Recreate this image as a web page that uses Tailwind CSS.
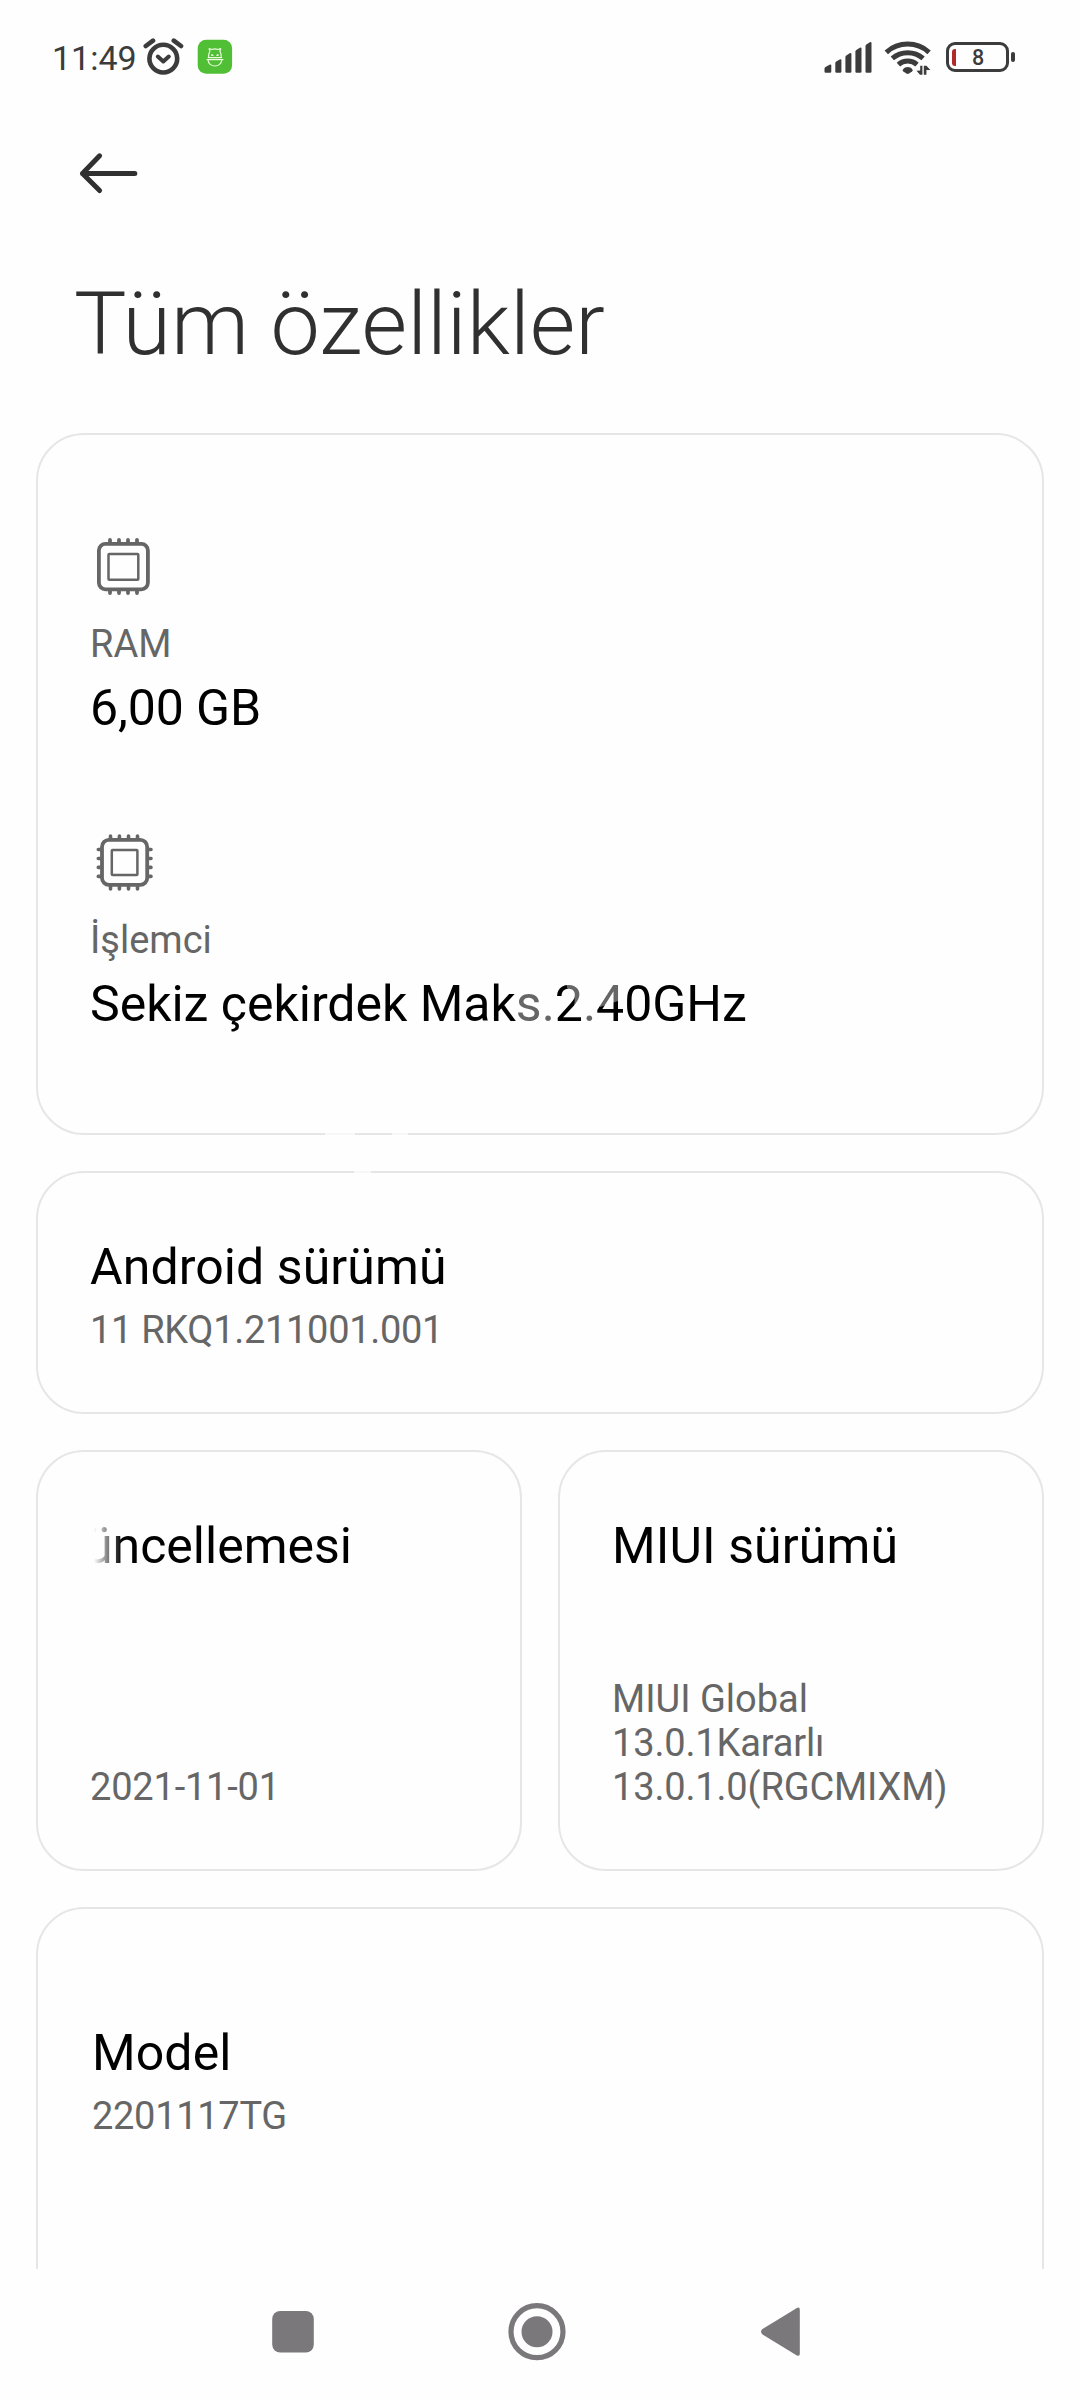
<!DOCTYPE html>
<html lang="tr">
<head>
<meta charset="utf-8">
<title>Tüm özellikler</title>
<script src="https://cdn.jsdelivr.net/npm/@tailwindcss/browser@4"></script>
</head>
<body class="bg-[#fefefe]">
<div class="relative flex h-[2400px] w-[1080px] flex-col overflow-hidden bg-[#fefefe] font-['Roboto',sans-serif] text-black">

  <!-- status bar -->
  <header class="flex h-[116px] shrink-0 items-start justify-between pr-[65px] pl-[52px] text-[#3c3c3c]">
    <div class="flex items-start pt-[38px]">
      <span class="w-[90px] text-[34px] leading-[40px] font-[450]">11:49</span>
      <svg class="h-[40px] w-[42px]" viewBox="142 38 42 40" fill="none" stroke="#3c3c3c" stroke-linecap="round" stroke-linejoin="round">
        <circle cx="163.3" cy="58.6" r="13.9" stroke-width="4.6"/>
        <path d="M157.8 56.500l5.500 5 5.500-5" stroke-width="4"/>
        <path d="M145.800 46l7.200-5.400M181 46l-7.200-5.400" stroke-width="4.600"/>
      </svg>
      <svg class="ml-[13px] h-[36px] w-[36px]" viewBox="197 38 36 36" fill="none">
        <rect x="197.700" y="39.800" width="34.400" height="34" rx="8.500" fill="#50bf35"/>
        <g stroke="#e9fbdc" stroke-width="1.200" stroke-linecap="round" stroke-linejoin="round">
          <path d="M208.600 57.500c-.2-2.200.3-4.600 1.300-6.200l-.8-2.600 3 .8c1.800-.7 3.800-.7 5.600 0l3-.8-.8 2.600c1 1.600 1.500 4 1.300 6.200"/>
          <path d="M207 59.600h16M208.200 57.600h13.400M208 60c.3 3.600 3.400 6 6.900 6s6.600-2.400 6.900-6"/>
          <path d="M211.800 54.900l.9.300M218 54.900l-.9.300" stroke-width="1.600"/>
        </g>
      </svg>
    </div>
    <div class="flex items-start pt-[38px]">
      <svg class="h-[36px] w-[48px]" viewBox="824 38 48 36" fill="#3c3c3c">
        <path d="M824.500 68.500q0-1 1-1.600l4-2.200q1.800-.8 1.800.8v6q0 1.200-1.200 1.200h-4.400q-1.200 0-1.200-1.200z"/>
        <path d="M835.300 63q0-1 .9-1.600l3.500-2q1.700-.8 1.700.8v11.300q0 1.200-1.200 1.200h-3.700q-1.200 0-1.200-1.200z"/>
        <path d="M845.400 57q0-1 .9-1.600l3.400-2.200q1.700-.8 1.700.8v17.500q0 1.200-1.200 1.200h-3.600q-1.200 0-1.200-1.200z"/>
        <path d="M855.400 51.500q0-1 .9-1.600l3.500-2.200q1.700-.8 1.700.8v23q0 1.200-1.200 1.200h-3.700q-1.200 0-1.200-1.200z"/>
        <path d="M865.500 46q0-1 .9-1.600l3.400-2.200q1.700-.8 1.700.8v28.500q0 1.200-1.200 1.200h-3.600q-1.200 0-1.200-1.200z"/>
      </svg>
      <svg class="ml-[12px] h-[38px] w-[48px]" viewBox="884 38 48 38" fill="none" stroke="#3c3c3c" stroke-width="5">
        <path d="M886.300 52.300a32 32 0 0 1 42.800 0"/>
        <path d="M892.300 58.400a23.500 23.500 0 0 1 30.800 0"/>
        <path d="M898.400 64.600a14 14 0 0 1 18.600 0"/>
        <path d="M903 69.500c2.500-3.200 7-3.200 9.400 0 .6.900.3 1.500-.4 2l-3 2q-1.300.8-2.600 0l-3-2c-.7-.5-1-1.100-.4-2z" fill="#3c3c3c" stroke="none"/>
        <path d="M916.500 70.800l3.700-.2v-4.800h2.200v9h-2.400zM923.800 74.800v-9h2.600l4 4.200h-4v4.800z" fill="#3c3c3c" stroke="none"/>
      </svg>
      <div class="mt-[4px] ml-[14px] flex items-center gap-[2px]">
        <div class="flex h-[30px] w-[63px] items-center rounded-[9px] border-3 border-[#3c3c3c] pl-[3px]">
          <span class="h-[17px] w-[4px] rounded-l-[3px] bg-[#b02a2a]"></span>
          <span class="mt-[2px] ml-[12px] w-[20px] text-center text-[21.500px] leading-[24px] font-medium">8</span>
        </div>
        <span class="h-[10px] w-[4px] rounded-[2px] bg-[#3c3c3c]"></span>
      </div>
    </div>
  </header>

  <!-- app bar -->
  <div class="flex h-[317px] shrink-0 flex-col items-start pt-[35px] pl-[74px]">
    <svg class="ml-[4px] h-[44px] w-[64px]" viewBox="78 151 64 44" fill="none" stroke="#303030" stroke-width="5" stroke-linecap="round" stroke-linejoin="round">
      <path d="M134.800 173.500H82.500M99.600 155.800L82.500 173.500l17.100 17"/>
    </svg>
    <h1 class="mt-[77px] text-[88px] leading-[104px] font-light tracking-[0.08px] text-[#303030]">Tüm özellikler</h1>
  </div>

  <main class="flex h-[1836px] shrink-0 flex-col gap-[36px] overflow-hidden px-[36px]">
    <section class="flex h-[702px] shrink-0 flex-col rounded-[48px] border-2 border-[#e6e6e6] px-[52px] pt-[99px]">
      <svg class="h-[64px] w-[64px]" viewBox="90 534 64 64" fill="none" stroke="#666" stroke-linecap="round">
        <rect x="98.900" y="543.900" width="49" height="45.400" rx="6.500" stroke-width="3.800"/>
        <rect x="108.500" y="553.900" width="29.800" height="25.900" rx="0.800" stroke-width="2.500"/>
        <path d="M110 540v3M119 540v3M128 540v3M137 540v3M110 590v3M119 590v3M128 590v3M137 590v3" stroke-width="3.800"/>
      </svg>
      <p class="mt-[24px] text-[38px] leading-[44px] text-[#666]">RAM</p>
      <p class="mt-[12px] text-[50px] leading-[60px] tracking-[-0.1px]">6,00 GB</p>
      <svg class="mt-[92px] h-[64px] w-[64px]" viewBox="90 830 64 64" fill="none" stroke="#666" stroke-linecap="round">
        <rect x="102" y="839.900" width="45.200" height="45" rx="7" stroke-width="3.800"/>
        <rect x="111.800" y="849.900" width="25.600" height="25.200" rx="0.800" stroke-width="2.500"/>
        <path d="M110.500 836v3M119.400 836v3M128.500 836v3M137.500 836v3M110.500 886v3M119.400 886v3M128.500 886v3M137.500 886v3M98.300 849.500h3M98.300 858.500h3M98.300 867.400h3M98.300 876.400h3M148 849.500h3M148 858.500h3M148 867.400h3M148 876.400h3" stroke-width="3.600"/>
      </svg>
      <p class="mt-[24px] text-[38px] leading-[44px] text-[#666]">İşlemci</p>
      <p class="mt-[12px] text-[50px] leading-[60px] tracking-[-0.02px]">Sekiz çekirdek Maks.2.40GHz</p>
    </section>

    <section class="flex h-[243px] shrink-0 flex-col rounded-[48px] border-2 border-[#e6e6e6] px-[52px] pt-[64px]">
      <h2 class="text-[50px] leading-[60px] tracking-[0.08px]">Android sürümü</h2>
      <p class="mt-[11px] text-[38px] leading-[44px] tracking-[-0.300px] text-[#666]">11 RKQ1.211001.001</p>
    </section>

    <div class="grid h-[421px] shrink-0 grid-cols-2 gap-[36px]">
      <section class="flex flex-col justify-between rounded-[48px] border-2 border-[#e6e6e6] px-[52px] pt-[64px] pb-[60px]">
        <h2 class="overflow-hidden [mask-image:linear-gradient(to_right,transparent_4px,black_32px)] text-[50px] leading-[60px]"><span class="ml-[-5px]">üncellemesi</span></h2>
        <p class="text-[38px] leading-[44px] tracking-[-0.200px] text-[#666]">2021-11-01</p>
      </section>
      <section class="flex flex-col justify-between rounded-[48px] border-2 border-[#e6e6e6] px-[52px] pt-[64px] pb-[60px]">
        <h2 class="text-[50px] leading-[60px] tracking-[0.1px]">MIUI sürümü</h2>
        <p class="text-[38px] leading-[44px] tracking-[-0.160px] text-[#666]"><span class="tracking-normal">MIUI Global</span><br>13.0.1Kararlı<br>13.0.1.0(RGCMIXM)</p>
      </section>
    </div>

    <section class="flex h-[480px] shrink-0 flex-col rounded-[48px] border-2 border-[#e6e6e6] px-[54px] pt-[114px]">
      <h2 class="text-[50px] leading-[60px] tracking-[0.1px]">Model</h2>
      <p class="mt-[11px] text-[38px] leading-[44px] tracking-[-0.300px] text-[#666]">2201117TG</p>
    </section>
  </main>

  <!-- navigation bar -->
  <nav class="flex flex-1 items-start pt-[31px] pl-[272px]">
    <svg class="h-[64px] w-[530px]" viewBox="272 2300 530 64" fill="#7a787a">
      <rect x="272.200" y="2311" width="41.600" height="41.600" rx="8"/>
      <circle cx="537" cy="2331.700" r="26" fill="none" stroke="#7a787a" stroke-width="5.200"/>
      <circle cx="537" cy="2331.700" r="15.500"/>
      <path d="M762.500 2329l34-20.800q3.300-1.800 3.300 1.500v44q0 3.300-3.300 1.500l-34-20.800q-3-2.700 0-5.400z"/>
    </svg>
  </nav>

  <!-- faint translucent marks over the cards -->
  <svg class="pointer-events-none absolute top-[960px] left-[300px] h-[220px] w-[360px]" viewBox="300 960 360 220" fill="#fefefe" fill-opacity="0.4">
    <path d="M518 984h24v30l-12 9h-12zM544 1012h10v12h-10zM567 982h16v20l-9 4q3-14-7-18zM585 1012h10v12h-10zM605 984h13v17l-18 6v-12z"/>
    <path d="M325 1131h30v6h-30zM392 1131h16v6h-16zM354 1168h17v6h-17z" fill-opacity="0.700"/>
  </svg>
</div>
</body>
</html>
